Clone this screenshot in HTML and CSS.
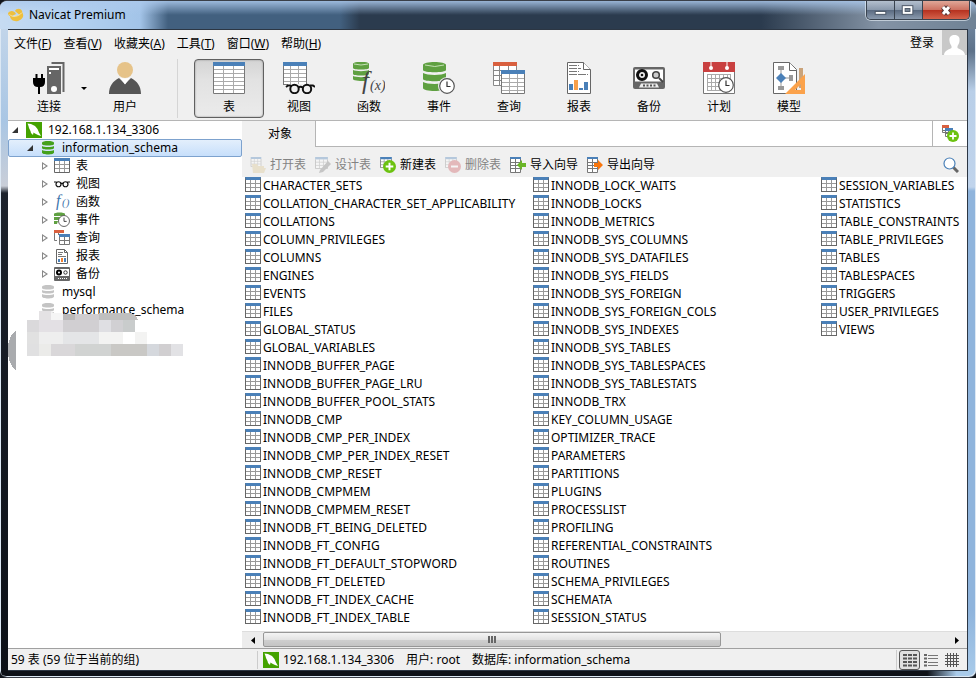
FILE: index.html
```html
<!DOCTYPE html>
<html lang="zh-CN">
<head>
<meta charset="utf-8">
<title>Navicat Premium</title>
<link rel="stylesheet" href="styles.css">
</head>
<body>
<svg class="sprite" aria-hidden="true">
  <symbol id="mysql" viewBox="0 0 16 16"><path fill="#44a200" d="M0 0h16v16H0z"/><path fill="#fff" d="M1.500 1.500L5 2l4 2 2.500 3 1.500 3.500 2 3.500-3-1-3-1.500-1.500-1L7 13l-2-2-.5-2L3 6 2.500 4z"/></symbol>
  <symbol id="db" viewBox="0 0 14 16"><g fill="currentColor"><path d="M1 3c0-2.600 12-2.600 12 0v1c0 2-12 2-12 0z"/><path d="M1 6c2 1.300 10 1.300 12 0v2c0 2-12 2-12 0z"/><path d="M1 10c2 1.300 10 1.300 12 0v2.500c0 2.600-12 2.600-12 0z"/></g></symbol>
  <symbol id="glasses" viewBox="0 0 32 14"><g fill="none" stroke="#111" stroke-width="2.400"><circle cx="9" cy="7.500" r="5"/><circle cx="23" cy="7.500" r="5"/><path d="M14 6.500q2-2 4 0M0 3h4l2 1.500M32 3h-4l-2 1.500"/></g></symbol>
  <symbol id="clock" viewBox="0 0 16 16"><circle cx="8" cy="8" r="7.300" fill="#fff" stroke="#555" stroke-width="1.200"/><path d="M8 3.500V8.500h3.500" fill="none" stroke="#333" stroke-width="1.200"/></symbol>
  <symbol id="plus" viewBox="0 0 12 12"><circle cx="6" cy="6" r="6" fill="#6cc210"/><path d="M6 2.500v7M2.500 6h7" stroke="#fff" stroke-width="1.800"/></symbol>
  <symbol id="grid" viewBox="0 0 16 15"><path fill="#fff" d="M0 0h16v15H0z"/><path d="M1 6.500h14M1 10.500h14M5.500 3v11M10.500 3v11" fill="none" stroke="#999"/><path d="M.5 3v11.500h15V3" fill="none" stroke="#666"/><path fill="#4a80b8" d="M0 0h16v3H0z"/></symbol>
  <symbol id="tape" viewBox="0 0 32 22"><rect width="32" height="22" rx="2" fill="#666"/><rect x="2" y="2.500" width="28" height="12" fill="#fff"/><circle cx="9" cy="8" r="4.500" fill="#eee" stroke="#111" stroke-width="3"/><circle cx="9" cy="8" r="1.300" fill="#111"/><circle cx="23" cy="8" r="3.300" fill="#ccc" stroke="#444" stroke-width="1.600"/><path d="M26 11l4 4" stroke="#444" stroke-width="2"/><path d="M8 16.500h16l2 4H6z" fill="#eee"/><path d="M10 18.500h13" stroke="#555" stroke-width="2" stroke-dasharray="2 1.500"/></symbol>
  <symbol id="report" viewBox="0 0 24 32"><path d="M.5.500h16l7 7v24H.500z" fill="#fff" stroke="#666"/><path d="M16.500.500v7h7" fill="#fff" stroke="#666"/><path d="M2 3.500h10M2 6.500h12M2 9.500h10M2 12.500h19" stroke="#777" stroke-dasharray="8 1"/><path fill="#4a80b8" d="M2 22h4v6H2zM12 26h4v2h-4zM17 20h4v8h-4z"/><path fill="#f9a04a" d="M7 18h4v10H7z"/></symbol>
</svg>

<header class="titlebar">
  <svg class="app-logo" viewBox="0 0 16 14"><g fill="#eebf3d"><path d="M7 3c1-3 6-3 7 0 1 2-1 4-3 3.500zM8 6C6 2 2 2.500 0 5c0 2 1 3 3 3.500z"/><path d="M2 7.500c4 2 9 .5 12-3.500 3 4 0 8-4 9-4 .8-8-1-8-5.500z"/></g><path d="M1.500 6.500c3 3 9 2.500 12.500-2" stroke="#fbe9a8" stroke-width=".8" fill="none"/></svg>
  <h1 class="title">Navicat Premium</h1>
  <div class="caption">
    <button class="cap" aria-label="最小化"><svg viewBox="0 0 28 18"><rect x="8.500" y="10.500" width="11" height="3" fill="#fff" stroke="#4a5565"/></svg></button>
    <button class="cap" aria-label="最大化"><svg viewBox="0 0 28 18"><rect x="7.500" y="4.500" width="11" height="9" fill="#fff" stroke="#4a5565"/><rect x="10.500" y="7.500" width="5" height="3" fill="#7a8798" stroke="#4a5565"/></svg></button>
    <button class="cap close" aria-label="关闭"><svg viewBox="0 0 46 18"><path d="M20 6l6 7m0-7l-6 7" stroke="#533" stroke-width="5"/><path d="M20 6l6 7m0-7l-6 7" stroke="#fff" stroke-width="3"/></svg></button>
  </div>
</header>

<div class="client">
  <div class="menubar">
    <nav class="menus">
      <button>文件(<u>F</u>)</button><button>查看(<u>V</u>)</button><button>收藏夹(<u>A</u>)</button><button>工具(<u>T</u>)</button><button>窗口(<u>W</u>)</button><button>帮助(<u>H</u>)</button>
    </nav>
    <button class="login">登录</button>
    <svg class="avatar" viewBox="0 0 25 25"><path fill="#c8c8c8" d="M0 0h25v25H0z"/><path fill="#fff" d="M12.500 5c4 0 5.500 2.500 5 6-.2 2.500-1.500 4-2 5v2c2 1.500 7 2 7.500 7H2c.5-5 5.500-5.500 7.500-7v-2c-.5-1-1.800-2.500-2-5-.5-3.500 1-6 5-6z"/></svg>
  </div>

  <div class="toolbar">
    <button class="tool"><svg viewBox="0 0 32 32"><path d="M18.500 1h12v29" fill="none" stroke="#666" stroke-width="2"/><path fill="#666" d="M14 4h14v28H14z"/><path fill="#fff" d="M16 6h10v2H16zM16 10h2v2h-2z"/><circle cx="21" cy="27" r="3" fill="#fff"/><path d="M3.500 12v5M9 12v5" stroke="#000" stroke-width="2"/><path d="M0 16h12v4q0 5-5 5v7H5v-7q-5 0-5-5z"/></svg><span>连接</span></button>
    <span class="drop"></span>
    <button class="tool"><svg viewBox="0 0 32 32"><circle cx="16" cy="8" r="8" fill="#e6c389"/><path fill="#555" d="M0 32c0-8 4-13 10-16l6 6 6-6c6 3 10 8 10 16z"/><path fill="#fff" d="M11 15.500q5 2 10 0l-5 7z"/></svg><span>用户</span></button>
    <span class="rule"></span>
    <button class="tool pressed"><svg viewBox="0 0 32 32"><path fill="#fff" d="M0 0h32v32H0z"/><path d="M1 7.500h30M1 11.500h30M1 15.500h30M1 19.500h30M1 23.500h30M1 27.500h30M10.500 4v27M20.500 4v27" fill="none" stroke="#aaa"/><path d="M.5 4v27.500h31V4" fill="none" stroke="#777"/><path fill="#4a80b8" d="M0 0h32v4H0z"/></svg><span>表</span></button>
    <button class="tool"><svg viewBox="0 0 32 32"><path fill="#fff" d="M0 0h24v22H0z"/><path d="M0 7.500h24M0 11.500h24M0 15.500h24M0 19.500h24M7.500 4v18M15.500 4v18" stroke="#aaa"/><path d="M.5 4v18M23.500 4v18M0 22.500h5" stroke="#777"/><path fill="#4a80b8" d="M0 0h24v4H0z"/><path fill="#f0f0f0" d="M6 22h26v10H6z"/><g fill="none" stroke="#111" stroke-width="2"><circle cx="11.500" cy="27" r="4.200" fill="#f0f0f0"/><circle cx="24" cy="27" r="4.200" fill="#f0f0f0"/><path d="M15.500 25.500q2-1.500 4.500 0M3 25l2-1.500h3M32 25l-2-1.500h-3"/></g></svg><span>视图</span></button>
    <button class="tool"><svg viewBox="0 0 32 32"><g fill="#5fa041"><path d="M0 2c0-3 16-3 16 0v4c0 2-16 2-16 0z"/><path d="M0 8c3 1.500 13 1.500 16 0v4c0 2-16 2-16 0z"/><path d="M0 14c3 1.500 13 1.500 16 0l-4 5c-7 0-12-.5-12-2z"/></g><path d="M1 2q7 2 14 0" stroke="#c4e0b4" fill="none"/><text class="fx" x="9" y="27" font-size="25">f</text><text class="fx" x="17" y="28" font-size="14">(x)</text></svg><span>函数</span></button>
    <button class="tool"><svg viewBox="0 0 32 32"><g fill="#5fa041"><path d="M0 3c0-4 23-4 23 0v5c0 3-23 3-23 0z"/><path d="M0 11c4 2.500 19 2.500 23 0v6c0 3-23 3-23 0z"/><path d="M0 20c4 2.500 19 2.500 23 0v6c0 4-23 4-23 0z"/></g><path d="M2 3q10 3 19 0" stroke="#c4e0b4" fill="none"/><circle cx="24" cy="24" r="9" fill="#f0f0f0"/><use href="#clock" x="16" y="16" width="16" height="16"/></svg><span>事件</span></button>
    <button class="tool"><svg viewBox="0 0 32 32"><path fill="#fff" d="M0 0h24v24H0z"/><path d="M.5 4v19.500H8M0 8.500h24M0 13.500h8M0 18.500h8M6.500 4v20M15.500 4v4M23.500 4v4" fill="none" stroke="#888"/><path fill="#d9603f" d="M0 0h24v4H0z"/><path fill="#fff" d="M8 8h24v24H8z"/><path d="M8 16.500h24M8 20.500h24M8 24.500h24M8 28.500h24M16.500 12v20M24.500 12v20" stroke="#aaa"/><path d="M8.500 12v19.500h23V12" fill="none" stroke="#777"/><path fill="#4a80b8" d="M8 8h24v4H8z"/></svg><span>查询</span></button>
    <button class="tool"><svg viewBox="0 0 32 32"><use href="#report" x="4" width="24" height="32"/></svg><span>报表</span></button>
    <button class="tool"><svg viewBox="0 0 32 32"><use href="#tape" y="5" width="32" height="22"/></svg><span>备份</span></button>
    <button class="tool"><svg viewBox="0 0 32 32"><path d="M.5.500h31v31H.500z" fill="#fff" stroke="#777"/><path fill="#c94040" d="M0 0h32v10H0z"/><path d="M8 0v5M24 0v5" stroke="#fff"/><circle cx="8" cy="6" r="2" fill="#fff"/><circle cx="24" cy="6" r="2" fill="#fff"/><path d="M4.500 12v17M8.500 12v17M12.500 12v17M16.500 12v17M20.500 12v17M24.500 12v17M27.500 12v17M4 12.500h24M4 16.500h24M4 20.500h24M4 24.500h24M4 28.500h24" stroke="#aaa"/><use href="#clock" x="15" y="15" width="16" height="16"/></svg><span>计划</span></button>
    <button class="tool"><svg viewBox="0 0 32 32"><path fill="#caa37a" d="M26 6h4v20h-4z"/><path d="M.5.500h16l7 7v24H.500z" fill="#fff" stroke="#666"/><path d="M16.500.500v8h7" fill="#fff" stroke="#666"/><path d="M8 6v20M8 16h10" stroke="#999"/><path fill="#999" d="M5 4h6v4H5zM5 24h6v4H5zM16 13h4v6h-4z"/><path fill="#4a80b8" d="M8 11l5 5-5 5-5-5z"/><path fill="#fba24b" fill-rule="evenodd" d="M32 12v20H12zM28 22v6h-6z"/></svg><span>模型</span></button>
  </div>

  <div class="main">
    <aside class="sidebar">
      <ul class="tree">
        <li class="lv1"><i class="open"></i><svg><use href="#mysql"/></svg><span>192.168.1.134_3306</span></li>
        <li class="lv2 selected"><i class="open"></i><svg class="green"><use href="#db"/></svg><span>information_schema</span></li>
        <li class="lv3"><i class="shut"></i><svg viewBox="0 0 16 16"><use href="#grid" width="16" height="15"/></svg><span>表</span></li>
        <li class="lv3"><i class="shut"></i><svg><use href="#glasses"/></svg><span>视图</span></li>
        <li class="lv3"><i class="shut"></i><svg class="fn-icon" viewBox="0 0 16 16"><text class="fn" x="2" y="12" font-size="16">f</text><text class="fn" x="8" y="12" font-size="11">()</text></svg><span>函数</span></li>
        <li class="lv3"><i class="shut"></i><svg viewBox="0 0 16 16"><g fill="#5fa041"><path d="M0 2c0-2 11-2 11 0v2H0z"/><path d="M0 5h9l-4 3H0zM0 9h4l-1 3H0z"/></g><use href="#clock" x="4" y="3" width="12" height="12"/></svg><span>事件</span></li>
        <li class="lv3"><i class="shut"></i><svg viewBox="0 0 16 16"><path d="M.5 3v7.500H3M4.500 3v2" stroke="#777" fill="none"/><path fill="#d9603f" d="M0 0h10v3H0z"/><path d="M5.500 7v7.500h10V7M6 10.500h9M10.500 7v7" fill="#fff" stroke="#777"/><path fill="#4a80b8" d="M5 4h11v3H5z"/></svg><span>查询</span></li>
        <li class="lv3"><i class="shut"></i><svg viewBox="0 0 16 16"><path d="M2.500 1.500h8l3 3v11h-11z" fill="#fff" stroke="#666"/><path d="M10.500 1.500v3h3" fill="none" stroke="#666"/><path d="M4 4.500h5M4 6.500h4M4 8.500h8" stroke="#777"/><path fill="#4a80b8" d="M4 11h2v3H4zM10 10h2v4h-2z"/><path fill="#f08030" d="M7 10h2v4H7z"/></svg><span>报表</span></li>
        <li class="lv3"><i class="shut"></i><svg viewBox="0 0 16 16"><rect y="1" width="16" height="14" rx="1" fill="#666"/><path fill="#fff" d="M1 3h14v7H1z"/><circle cx="5" cy="6.500" r="2" fill="#fff" stroke="#000" stroke-width="2"/><circle cx="11.500" cy="6.500" r="1.700" fill="none" stroke="#333"/><path d="M4 12.500h9" stroke="#fff" stroke-dasharray="1 1"/></svg><span>备份</span></li>
        <li class="lv2"><i></i><svg class="grey"><use href="#db"/></svg><span>mysql</span></li>
        <li class="lv2"><i></i><svg class="grey"><use href="#db"/></svg><span>performance_schema</span></li>
      </ul>
      <svg class="mosaic" viewBox="0 0 180 60" shape-rendering="crispEdges" aria-hidden="true">
        <path fill="#a9abae" d="M8 20Q0 24 0 39t8 20z"/><path fill="#fff" d="M8 15Q12 9 20 9h115v11H20v36H8z"/>
        <path fill="#e4e2e4" d="M31 0h12v9H31z"/><path fill="#f5f5f5" d="M43 2h12v7H43z"/><path fill="#bbb9b9" d="M55 3h12v6H55z"/><path fill="#cfcccf" d="M67 3h24v6H67z"/><path fill="#bfbfbf" d="M91 2h32q5 2 7 7H91z"/>
        <path fill="#dad9db" d="M19 9h12v12H19z"/><path fill="#e3e0e4" d="M31 9h24v12H31z"/><path fill="#d1cfd2" d="M55 9h36v12H55z"/><path fill="#dfdfe3" d="M91 9h12v12H91z"/><path fill="#d1d0d3" d="M103 9h12v12h-12z"/><path fill="#c9cccc" d="M115 9h12v12h-12z"/>
        <path fill="#e1e1e1" d="M19 21h12v12H19z"/><path fill="#eeeeee" d="M31 21h24v12H31z"/><path fill="#e4e5e7" d="M55 21h36v12H55z"/><path fill="#f3f3f2" d="M91 21h24v12H91zM127 21h12v12h-12z"/>
        <path fill="#e0e0e1" d="M19 33h12v12H19z"/><path fill="#ebebe9" d="M31 33h12v12H31z"/><path fill="#d9d7d9" d="M43 33h24v12H43z"/><path fill="#d1d3d2" d="M67 33h36v12H67z"/><path fill="#c9c8c5" d="M103 33h36v12h-36z"/><path fill="#d5d8dd" d="M139 33h12v12h-12z"/><path fill="#d1cfd1" d="M151 33h12v12h-12z"/><path fill="#e2e2e5" d="M163 33h12v12h-12z"/>
      </svg>
    </aside>

    <section class="content">
      <div class="tabs">
        <button class="tab">对象</button>
        <div class="tab-fill"></div>
        <button class="new-query" aria-label="新建查询"><svg viewBox="0 0 18 18"><path d="M1.500 3v4.500h6V3M1 5.500h7M4.500 3v4M4.500 6v5.500h7M4 8.500h7M7.500 6v5" fill="#fff" stroke="#777"/><path fill="#d9603f" d="M1 0h7v3H1z"/><path fill="#4a80b8" d="M4 3h8v3H4z"/><use href="#plus" x="6" y="5" width="12" height="12"/></svg></button>
      </div>
      <div class="actions">
        <button disabled><svg viewBox="0 0 16 16"><use href="#grid" width="12" height="10"/><path fill="#dcc48c" d="M2 7h5l1 2h6v2h2l-2 5H3z"/></svg>打开表</button>
        <button disabled><svg viewBox="0 0 16 16"><use href="#grid" width="13" height="12"/><path d="M5 13l8-9 3 3-8 8-4 1z" fill="#777"/></svg>设计表</button>
        <button><svg viewBox="0 0 16 16"><use href="#grid" width="12" height="11"/><use href="#plus" x="3" y="3" width="13" height="13"/></svg>新建表</button>
        <button disabled><svg viewBox="0 0 16 16"><use href="#grid" width="12" height="11"/><circle cx="9.500" cy="9.500" r="6.500" fill="#cc5358"/><path d="M6 9.500h7" stroke="#fff" stroke-width="2"/></svg>删除表</button>
        <button><svg viewBox="0 0 16 16"><path d="M.5 0v15.500h10V0M1 5.500h9M1 8.500h9M1 11.500h9M5.500 2v13" fill="#fff" stroke="#777"/><path fill="#4a80b8" d="M0 0h11v2H0z"/><path fill="#69b526" d="M7 8l5-5v3h4v4h-4v3z"/></svg>导入向导</button>
        <button><svg viewBox="0 0 16 16"><path d="M.5 0v15.500h10V0M1 5.500h9M1 8.500h9M1 11.500h9M5.500 2v13" fill="#fff" stroke="#777"/><path fill="#4a80b8" d="M0 0h11v2H0z"/><path fill="#f9750b" d="M16 8l-5-5v3H7v4h4v3z"/></svg>导出向导</button>
        <button class="search" aria-label="搜索"><svg viewBox="0 0 16 16"><path d="M10 10l5 5" stroke="#666" stroke-width="3"/><circle cx="6.500" cy="6.500" r="5.500" fill="#fff" stroke="#4a80b8" stroke-width="1.200"/></svg></button>
      </div>
      <ul class="objects">
        <li>CHARACTER_SETS</li><li>COLLATION_CHARACTER_SET_APPLICABILITY</li><li>COLLATIONS</li><li>COLUMN_PRIVILEGES</li><li>COLUMNS</li>
        <li>ENGINES</li><li>EVENTS</li><li>FILES</li><li>GLOBAL_STATUS</li><li>GLOBAL_VARIABLES</li>
        <li>INNODB_BUFFER_PAGE</li><li>INNODB_BUFFER_PAGE_LRU</li><li>INNODB_BUFFER_POOL_STATS</li><li>INNODB_CMP</li><li>INNODB_CMP_PER_INDEX</li>
        <li>INNODB_CMP_PER_INDEX_RESET</li><li>INNODB_CMP_RESET</li><li>INNODB_CMPMEM</li><li>INNODB_CMPMEM_RESET</li><li>INNODB_FT_BEING_DELETED</li>
        <li>INNODB_FT_CONFIG</li><li>INNODB_FT_DEFAULT_STOPWORD</li><li>INNODB_FT_DELETED</li><li>INNODB_FT_INDEX_CACHE</li><li>INNODB_FT_INDEX_TABLE</li>
        <li>INNODB_LOCK_WAITS</li><li>INNODB_LOCKS</li><li>INNODB_METRICS</li><li>INNODB_SYS_COLUMNS</li><li>INNODB_SYS_DATAFILES</li>
        <li>INNODB_SYS_FIELDS</li><li>INNODB_SYS_FOREIGN</li><li>INNODB_SYS_FOREIGN_COLS</li><li>INNODB_SYS_INDEXES</li><li>INNODB_SYS_TABLES</li>
        <li>INNODB_SYS_TABLESPACES</li><li>INNODB_SYS_TABLESTATS</li><li>INNODB_TRX</li><li>KEY_COLUMN_USAGE</li><li>OPTIMIZER_TRACE</li>
        <li>PARAMETERS</li><li>PARTITIONS</li><li>PLUGINS</li><li>PROCESSLIST</li><li>PROFILING</li>
        <li>REFERENTIAL_CONSTRAINTS</li><li>ROUTINES</li><li>SCHEMA_PRIVILEGES</li><li>SCHEMATA</li><li>SESSION_STATUS</li>
        <li>SESSION_VARIABLES</li><li>STATISTICS</li><li>TABLE_CONSTRAINTS</li><li>TABLE_PRIVILEGES</li><li>TABLES</li>
        <li>TABLESPACES</li><li>TRIGGERS</li><li>USER_PRIVILEGES</li><li>VIEWS</li>
      </ul>
      <div class="scrollbar">
        <button aria-label="向左滚动"><svg viewBox="0 0 4 7"><path d="M4 0v7L0 3.500z"/></svg></button>
        <div class="track"><div class="thumb"></div></div>
        <button aria-label="向右滚动"><svg viewBox="0 0 4 7"><path d="M0 0v7l4-3.500z"/></svg></button>
      </div>
    </section>
  </div>

  <footer class="status">
    <span class="count">59 表 (59 位于当前的组)</span>
    <div class="info"><svg><use href="#mysql"/></svg><span>192.168.1.134_3306</span><span>用户: root</span><span>数据库: information_schema</span></div>
    <div class="views">
      <button class="on" aria-label="列表"><svg viewBox="0 0 14 14"><path d="M0 2h14M0 5.500h14M0 9h14M0 12.500h14" stroke="#555" stroke-width="2" stroke-dasharray="4 1"/></svg></button>
      <button aria-label="详细信息"><svg viewBox="0 0 14 14"><path d="M0 2h3M0 5.500h3M0 9h3M0 12.500h3" stroke="#666" stroke-width="2"/><path d="M4 2.500h10M4 5.500h10M4 9.500h10M4 12.500h10" stroke="#777"/></svg></button>
      <button aria-label="ER 图表"><svg viewBox="0 0 14 14"><path d="M2.500 0v14M5.500 0v14M8.500 0v14M11.500 0v14M0 2.500h14M0 5.500h14M0 8.500h14M0 11.500h14" stroke="#555"/></svg></button>
    </div>
  </footer>
</div>
</body>
</html>
```

FILE: styles.css
```css
*, *::before { box-sizing: border-box; }
html { height: 100%; background: #10141b; }
body {
  margin: 0;
  height: 100vh;
  display: flex;
  flex-direction: column;
  padding: 0 8px 6px;
  border: 1px solid #3a3f48;
  border-width: 1px 0 1px;
  border-radius: 7px;
  font: 12px/18px "Noto Sans", "Noto Sans CJK SC", sans-serif;
  color: #000;
  background:
    linear-gradient(#c9d9eb, #a9c6e4 120px, #c9ced8 185px, #1c222c 192px, #0c1017) left / 8px 100% no-repeat,
    linear-gradient(#7f95ae, #5c7189 50px, #b9cfe8 90px, #c0d4ec 186px, #8fb4dc 190px, #8fb4dc 90%, #a9cbea) right / 8px 100% no-repeat,
    linear-gradient(90deg, transparent 95%, #a9cbea 98%) bottom / 100% 8px no-repeat,
    #0d1118;
  box-shadow: inset 1px 1px 0 #dce8f4, inset -1px -1px 0 #dce8f4;
}
button { font: inherit; color: inherit; background: none; border: 0; padding: 0; margin: 0; }
ul { list-style: none; margin: 0; padding: 0; }
svg { display: block; flex: none; }
.sprite { position: absolute; width: 0; height: 0; }

.titlebar {
  display: flex;
  align-items: center;
  height: 28px;
  flex: none;
  margin: 0 -8px;
  padding: 0 6px 0 8px;
  border-radius: 7px 7px 0 0;
  background:
    linear-gradient(rgba(172, 201, 236, .85), rgba(160, 190, 220, 0) 14px),
    linear-gradient(90deg, #c6dbf2, #b4d2f1 70px, #a3c4e8 140px, #42607f 168px, #42607f 340px, #2b3b4e 360px, #2b3b4e 78%, #8493a5 90%, #6f8295);
}
.app-logo { width: 16px; height: 14px; }
.title { margin: 0 0 0 5px; font-size: 12px; font-weight: 400; flex: 1; }
.caption {
  display: flex;
  align-self: flex-start;
  border: 1px solid #39434f;
  border-top: 0;
  border-radius: 0 0 5px 5px;
  overflow: hidden;
  box-shadow: 0 0 0 1px rgba(235, 243, 250, .6);
}
.cap { width: 28px; height: 18px; background: linear-gradient(#b3bfce, #8a99ac 48%, #59697f 50%, #8a9aae); border-right: 1px solid #39434f; }
.cap svg { width: 100%; height: 18px; }
.close { width: 46px; border: 0; background: linear-gradient(#e0a798, #cd7262 48%, #b5301e 50%, #d4624b); }

.client {
  flex: 1;
  min-height: 0;
  display: flex;
  flex-direction: column;
  border: 1px solid #2c3643;
  background: #f0f0f0;
  border-left: 0;
}
.menubar { display: flex; align-items: flex-start; height: 26px; flex: none; }
.menus { display: flex; gap: 12px; flex: 1; padding: 5px 0 0 6px; }
.login { margin: 4px 8px 0 0; }
.avatar { width: 25px; height: 25px; }

.toolbar { display: flex; height: 65px; flex: none; padding: 3px 0 2px 6px; border-bottom: 1px solid #b5b5b5; }
.tool { width: 70px; display: flex; flex-direction: column; align-items: center; padding-top: 2px; gap: 4px; border: 1px solid transparent; border-radius: 4px; }
.tool svg { width: 32px; height: 32px; }
.pressed { border-color: #606060; background: linear-gradient(#d4d4d4, #e2e2e2 20px, #ebebeb); box-shadow: inset 0 0 2px #888; }
.drop { align-self: center; border: 3px solid transparent; border-top-color: #000; border-bottom: 0; margin: 0 3px 0 -3px; }
.rule { width: 1px; background: #d5d5d5; margin: 0 16px 0 17px; }
.fx { font-family: "Liberation Serif", serif; font-style: italic; fill: #444; }
.fn { font-family: "Liberation Serif", serif; font-style: italic; fill: #3f76ae; }
.fn-icon { overflow: visible; }

.main { flex: 1; min-height: 0; display: flex; }
.sidebar { width: 234px; flex: none; background: #fff; position: relative; }
.tree li { display: flex; align-items: center; height: 18px; border: 1px solid transparent; border-radius: 2px; white-space: nowrap; }
.tree svg { width: 16px; height: 16px; margin-right: 6px; }
.tree i { width: 14px; flex: none; display: flex; }
.lv1 { padding-left: 3px; }
.lv2 { padding-left: 18px; }
.lv2 svg { width: 14px; margin-right: 7px; }
.lv3 { padding-left: 32px; }
.lv3 i { width: 13px; }
.tree .selected { border-color: #7da2ce; background: linear-gradient(#e3effc, #c7dffb); }
.open::before { content: ""; border: 6px solid transparent; border-width: 0 0 6px 6px; border-bottom-color: #333; }
.shut::before { content: ""; width: 6px; height: 8px; clip-path: polygon(0 0, 100% 50%, 0 100%, 0 0, 1px 2px, 1px 6px, 4px 4px, 1px 2px); background: #888; margin-left: 1px; }
.green { color: #44a11d; }
.grey { color: #c4c4c4; }
.mosaic { position: absolute; left: 0; top: 190px; width: 180px; height: 60px; }

.content { flex: 1; min-width: 0; display: flex; flex-direction: column; }
.tabs { display: flex; height: 26px; flex: none; }
.tab { width: 73px; padding-left: 3px; }
.tab-fill { flex: 1; background: #fff; border: 1px solid #b5b5b5; border-top: 0; }
.new-query { width: 34px; background: #fff; border-bottom: 1px solid #b5b5b5; display: flex; align-items: center; justify-content: center; }
.new-query svg { width: 18px; height: 18px; }
.actions { display: flex; align-items: center; height: 30px; flex: none; padding: 5px 8px 0; gap: 9px; }
.actions button { display: flex; align-items: center; gap: 4px; white-space: nowrap; }
.actions svg { width: 16px; height: 16px; }
.actions button:disabled { color: #838383; }
.actions button:disabled svg { opacity: .35; }
.actions .search { margin-left: auto; }
.objects {
  flex: 1;
  min-height: 0;
  overflow: hidden;
  background: #fff;
  display: grid;
  grid-template-rows: repeat(25, 18px);
  grid-auto-flow: column;
  grid-auto-columns: 288px;
  padding-left: 3px;
}
.objects li { display: flex; gap: 2px; line-height: 18px; white-space: nowrap; }
.objects li::before {
  content: "";
  width: 16px;
  height: 15px;
  flex: none;
  border: 1px solid #666;
  border-top: 3px solid #4a80b8;
  background:
    repeating-linear-gradient(90deg, transparent 0 4px, #999 4px 5px),
    repeating-linear-gradient(#fff 0 3px, #999 3px 4px);
}
.scrollbar { display: flex; height: 17px; flex: none; background: #ececec; border-top: 1px solid #ddd; }
.scrollbar button { width: 21px; display: flex; align-items: center; justify-content: center; }
.scrollbar button svg { width: 4px; height: 7px; }
.track { flex: 1; }
.thumb { width: 67%; height: 15px; border: 1px solid #979797; border-radius: 2px; background: repeating-linear-gradient(90deg, #666 0 2px, transparent 2px 3px) center / 8px 7px no-repeat, linear-gradient(#f4f4f4, #e3e3e3 50%, #cfcfcf 51%, #c4c4c4); }

.status { display: flex; height: 22px; flex: none; border-top: 1px solid #a0a0a0; align-items: center; padding-top: 1px; }
.count { width: 250px; padding-left: 3px; border-right: 1px solid #ccc; }
.info { flex: 1; display: flex; align-items: center; padding-left: 5px; gap: 12px; white-space: nowrap; }
.info svg { width: 16px; height: 16px; margin-right: -8px; }
.views { display: flex; align-items: center; height: 100%; border-left: 1px solid #ccc; padding: 0 5px 0 2px; }
.views button { width: 21px; height: 20px; display: flex; align-items: center; justify-content: center; border: 1px solid transparent; border-radius: 3px; }
.views svg { width: 14px; height: 14px; }
.views .on { border-color: #555; background: #e0e0e0; }
```
